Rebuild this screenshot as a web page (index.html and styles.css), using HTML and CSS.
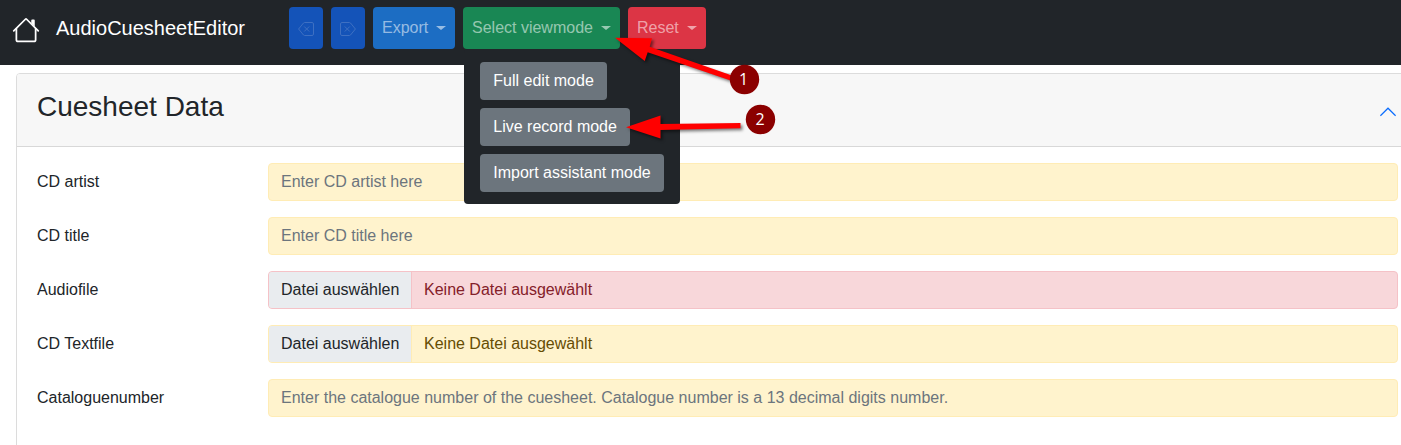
FILE: index.html
```html
<!DOCTYPE html>
<html lang="de">
<head>
<meta charset="utf-8">
<title>AudioCuesheetEditor</title>
<link rel="stylesheet" href="styles.css">
</head>
<body>
<nav class="navbar">
  <svg class="home" viewBox="0 0 16 16" fill="currentColor"><path fill-rule="evenodd" d="M2 13.5V7h1v6.5a.5.5 0 0 0 .5.5h9a.5.5 0 0 0 .5-.5V7h1v6.5a1.5 1.5 0 0 1-1.5 1.5h-9A1.5 1.5 0 0 1 2 13.5zm11-11V6l-2-2V2.5a.5.5 0 0 1 .5-.5h1a.5.5 0 0 1 .5.5z"/><path fill-rule="evenodd" d="M7.293 1.5a1 1 0 0 1 1.414 0l6.647 6.646a.5.5 0 0 1-.708.708L8 2.207 1.354 8.854a.5.5 0 1 1-.708-.708L7.293 1.5z"/></svg>
  <a class="brand">AudioCuesheetEditor</a>
  <div class="toolbar">
    <button class="tool icon-tool"><svg viewBox="0 0 16 16"><path d="M6.6 1.5H14A1.5 1.5 0 0 1 15.5 3v10a1.5 1.5 0 0 1-1.5 1.5H6.6a1.5 1.5 0 0 1-1.1-.5L.6 8l4.9-6a1.5 1.5 0 0 1 1.1-.5zM6.2 5.500l5 5m0-5l-5 5"/></svg></button>
    <button class="tool icon-tool"><svg class="flip" viewBox="0 0 16 16"><path d="M6.6 1.5H14A1.5 1.5 0 0 1 15.5 3v10a1.5 1.5 0 0 1-1.5 1.5H6.6a1.5 1.5 0 0 1-1.1-.5L.6 8l4.9-6a1.5 1.5 0 0 1 1.1-.5zM6.2 5.500l5 5m0-5l-5 5"/></svg></button>
    <button class="tool export">Export<i class="caret"></i></button>
    <div class="dropdown">
      <button class="tool view">Select viewmode<i class="caret"></i></button>
      <div class="menu">
        <button class="option">Full edit mode</button>
        <button class="option">Live record mode</button>
        <button class="option">Import assistant mode</button>
      </div>
    </div>
    <button class="tool reset">Reset<i class="caret"></i></button>
  </div>
</nav>
<main class="card">
  <header class="card-header">
    <h3>Cuesheet Data</h3>
    <svg class="chevron" viewBox="0 0 16 10"><path d="M.4 8.700 8 1.200l7.600 7.500"/></svg>
  </header>
  <div class="fields">
    <div class="row"><label>CD artist</label><div class="input"><span class="hint">Enter CD artist here</span></div></div>
    <div class="row"><label>CD title</label><div class="input"><span class="hint">Enter CD title here</span></div></div>
    <div class="row"><label>Audiofile</label><div class="input danger"><span class="choose">Datei auswählen</span><span class="file">Keine Datei ausgewählt</span></div></div>
    <div class="row"><label>CD Textfile</label><div class="input"><span class="choose">Datei auswählen</span><span class="file">Keine Datei ausgewählt</span></div></div>
    <div class="row"><label>Cataloguenumber</label><div class="input"><span class="hint">Enter the catalogue number of the cuesheet. Catalogue number is a 13 decimal digits number.</span></div></div>
  </div>
</main>
<svg class="annotations" viewBox="0 0 1401 445">
  <g class="arrow">
    <path d="M615 37.800 652 38.300 649.700 46.800 732 75.500 730.500 80.500 647.700 52.300 644.700 61z"/>
    <path d="M626 127.300 660.500 115.500 660.500 124 740.500 123 740.500 128.300 660.500 130 660.500 138.500z"/>
  </g>
  <circle cx="744.500" cy="79.500" r="14.700"/>
  <circle cx="760.500" cy="119.500" r="14.700"/>
  <text x="743.500" y="85">1</text>
  <text x="760" y="125">2</text>
</svg>
</body>
</html>
```
FILE: styles.css
```css
* { box-sizing: border-box; }
body {
  margin: 0;
  height: 445px;
  overflow: hidden;
  background: #fff;
  color: #212529;
  font: 16px/24px "Liberation Sans", Arial, sans-serif;
}
button { font: inherit; border: 0; margin: 0; white-space: nowrap; }
.navbar {
  height: 65px;
  background: #212529;
  display: flex;
  align-items: flex-start;
  padding: 7px 0 0 12px;
}
.home { width: 28px; height: 28px; color: #fff; margin: 9px 16px 0 0; flex: none; }
.brand { color: #fff; font-size: 20px; line-height: 30px; width: 233px; margin-top: 6px; flex: none; }
.toolbar { display: flex; gap: 8px; }
.tool {
  height: 42px;
  border-radius: 4px;
  padding: 0 9px;
  display: flex;
  align-items: center;
  color: rgba(255, 255, 255, .55);
}
.icon-tool { width: 34px; background: #1453b8; color: #3e70c2; }
.icon-tool svg { width: 16px; height: 16px; flex: none; fill: none; stroke: currentColor; stroke-width: 1; margin-top: 2px; }
.icon-tool .flip { transform: scaleX(-1); }
.export { width: 82px; background: #1c6dc3; }
.view { width: 157px; background: #198754; }
.reset { width: 78px; background: #dc3545; }
.caret { margin: 0 0 1px auto; border: 4.8px solid transparent; border-top-color: currentColor; border-bottom: 0; border-left-width: 5px; border-right-width: 5px; }
.dropdown { position: relative; }
.menu {
  position: absolute;
  z-index: 2;
  left: 1px;
  top: 42px;
  width: 216px;
  height: 155px;
  padding: 13px 16px 12px;
  display: flex;
  flex-direction: column;
  align-items: flex-start;
  gap: 8px;
  background: #212529;
  border-radius: 4px;
}
.option { height: 38px; flex: none; padding: 0 13.3px; background: #6c757d; color: #fff; border-radius: 4px; }
.card { margin: 8px -8px 0 16px; height: 390px; border: 1px solid #dcdcdc; border-radius: 4px 0 0; }
.card-header {
  height: 73px;
  padding: 0 12px 0 20px;
  background: #f7f7f7;
  border-bottom: 1px solid #d8d8d8;
  border-radius: 3px 0 0;
  display: flex;
  align-items: center;
  justify-content: space-between;
}
.card-header h3 { margin: 0 0 6px; font-size: 28px; line-height: 34px; font-weight: 400; }
.chevron { width: 16px; height: 10px; margin-top: 3px; overflow: visible; fill: none; stroke: #0d6efd; stroke-width: 1.2; }
.fields { display: grid; gap: 16px; padding: 16px 10px 0 20px; }
.row { display: grid; grid-template-columns: 231px 1fr; height: 38px; align-items: center; }
.input {
  height: 38px;
  border: 1px solid #ffecb5;
  border-radius: 4px;
  background: #fff3cd;
  color: #664d03;
  display: flex;
  align-items: center;
  overflow: hidden;
}
.danger { border-color: #f5c2c7; background: #f8d7da; color: #842029; }
.hint { padding-left: 12px; color: #6c757d; }
.choose {
  width: 143px;
  height: 36px;
  flex: none;
  padding: 6px 12px;
  white-space: nowrap;
  background: #e9ecef;
  color: #212529;
  border-right: 1px solid #ffecb5;
}
.danger .choose { border-right-color: #f5c2c7; }
.file { padding-left: 12px; }
.annotations { position: absolute; z-index: 3; left: 0; top: 0; width: 1401px; height: 445px; pointer-events: none; }
.arrow { fill: #f00; filter: drop-shadow(2px 2px 1.5px rgba(0, 0, 0, .5)); }
.annotations circle { fill: #8b0000; }
.annotations text { fill: #fff; font: 16px "Open Sans", sans-serif; text-anchor: middle; }
```
